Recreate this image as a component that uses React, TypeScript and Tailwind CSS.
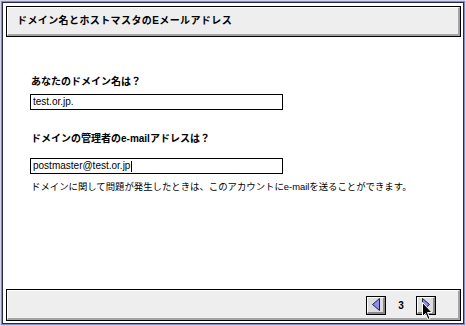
import React from 'react';

function Bevel({ className, children }: { className?: string; children?: React.ReactNode }) {
  return (
    <div className={`border border-black ${className ?? ''}`}>
      <div className="h-full border-t border-l border-t-white border-l-white border-b-2 border-r-2 border-b-[#a4a4a4] border-r-[#a4a4a4] bg-[#eeeeee]">
        {children}
      </div>
    </div>
  );
}

function ArrowButton({ dir }: { dir: 'left' | 'right' }) {
  return (
    <div className="w-[20px] h-[19px] border border-black">
      <div className="h-full flex items-center justify-center border-t border-l border-t-white border-l-white border-b-2 border-r-2 border-b-[#888888] border-r-[#888888] bg-[#dddddd]">
        <svg width="8" height="13" viewBox="0 0 8 13">
          {dir === 'left' ? (
            <polygon points="7.5,0.5 7.5,12.5 0.5,6.5" fill="#8c8cf0" stroke="#222244" strokeWidth="1" />
          ) : (
            <polygon points="0.5,0.5 0.5,12.5 7.5,6.5" fill="#8c8cf0" stroke="#222244" strokeWidth="1" />
          )}
        </svg>
      </div>
    </div>
  );
}

export default function App() {
  return (
    <div className="w-[466px] h-[326px] border border-[#d4d4ea] bg-white font-['Liberation_Sans','Noto_Sans_CJK_JP',sans-serif] text-black">
      <div className="h-full border border-[#8c8cbc]">
        <div className="relative h-full border border-[#2a2a4a] flex flex-col pt-[3px] pl-[3px] pr-[2px] pb-[2px]">
          {/* Header */}
          <Bevel className="h-[31px]">
            <div className="h-full flex items-center pl-[9px] text-[10px] font-bold leading-[12px] tracking-[0.4px]">
              ドメイン名とホストマスタのEメールアドレス
            </div>
          </Bevel>

          {/* Body */}
          <div className="flex-1 flex flex-col pl-[24px] text-[10px] leading-[12px]">
            <div className="mt-[39px] pl-[1px] font-bold">あなたのドメイン名は？</div>
            <div className="mt-[6px] w-[253px] h-[16px] border border-black flex items-center pl-[2px]">
              test.or.jp.
            </div>
            <div className="mt-[23px] pl-[1px] font-bold">ドメインの管理者のe-mailアドレスは？</div>
            <div className="mt-[13px] w-[253px] h-[16px] border border-black flex items-center pl-[2px]">
              postmaster@test.or.jp
              <span className="ml-[1px] w-px h-[11px] bg-black" />
            </div>
            <div className="mt-[7px] pl-[1px] text-[9.4px]">
              ドメインに関して問題が発生したときは、このアカウントにe-mailを送ることができます。
            </div>
          </div>

          {/* Footer */}
          <Bevel className="h-[32px]">
            <div className="h-full flex items-center justify-end pr-[22px] pt-[1px]">
              <ArrowButton dir="left" />
              <span className="w-[30px] text-center text-[10px] font-bold">3</span>
              <ArrowButton dir="right" />
            </div>
          </Bevel>

          {/* mouse cursor */}
          <svg className="absolute left-[419px] top-[299px]" width="12" height="19" viewBox="0 0 12 19">
            <path d="M0.5 0.5 L0.5 14.5 L3.5 11.5 L6 17.5 L8 16.5 L5.5 10.5 L10 10.5 Z" fill="black" stroke="white" strokeWidth="1" />
          </svg>
        </div>
      </div>
    </div>
  );
}
